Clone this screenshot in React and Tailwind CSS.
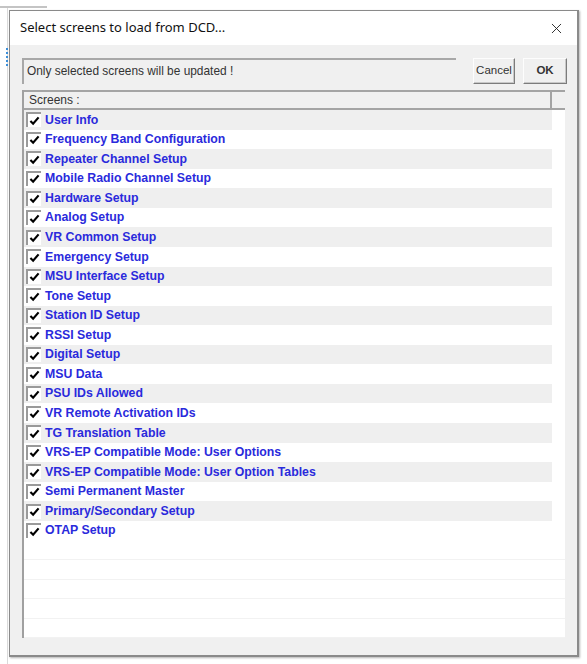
import { X } from 'lucide-react';

const SCREENS = [
  'User Info',
  'Frequency Band Configuration',
  'Repeater Channel Setup',
  'Mobile Radio Channel Setup',
  'Hardware Setup',
  'Analog Setup',
  'VR Common Setup',
  'Emergency Setup',
  'MSU Interface Setup',
  'Tone Setup',
  'Station ID Setup',
  'RSSI Setup',
  'Digital Setup',
  'MSU Data',
  'PSU IDs Allowed',
  'VR Remote Activation IDs',
  'TG Translation Table',
  'VRS-EP Compatible Mode: User Options',
  'VRS-EP Compatible Mode: User Option Tables',
  'Semi Permanent Master',
  'Primary/Secondary Setup',
  'OTAP Setup',
];

const tahoma = { fontFamily: '"Liberation Sans", Arial, sans-serif' };

function CheckBox() {
  return (
    <span className="flex h-[15px] w-[15px] shrink-0 items-center justify-center border-l-2 border-t-2 border-l-[#9a9a9a] border-t-[#9a9a9a] bg-white">
      <svg width="11" height="10" viewBox="0 0 12 11" aria-hidden>
        <path d="M1.5 5.5 L4.5 8.5 L10.5 1.5" fill="none" stroke="#000" strokeWidth="2.4" />
      </svg>
    </span>
  );
}

function ScreenRow({ label, shaded }) {
  return (
    <div className="flex h-[19.57px] shrink-0">
      <div className={`flex w-[528px] items-center pl-[2px] ${shaded ? 'bg-[#efefef]' : 'bg-white'}`}>
        <CheckBox />
        <span className="ml-[4px] text-[12.3px] font-bold text-[#2a2adc]" style={tahoma}>
          {label}
        </span>
      </div>
      <div className="flex-1 bg-white" />
    </div>
  );
}

function WinButton({ children, className = '' }) {
  return (
    <button
      type="button"
      className={`h-[26px] border border-t-[#fdfdfd] border-l-[#fdfdfd] border-r-[#7c7c7c] border-b-[#7c7c7c] bg-[#f0f0f0] text-[11.5px] text-[#333] shadow-[inset_-1px_-1px_0_#c8c8c8] ${className}`}
      style={tahoma}
    >
      {children}
    </button>
  );
}

export default function App() {
  return (
    <div className="relative h-[664px] w-[587px] overflow-hidden bg-white">
      {/* window behind the dialog */}
      <div className="absolute left-0 top-[6px] h-[2px] w-[47px] bg-[#c4c4c4]" />
      <div className="absolute left-[7px] top-[8px] h-[656px] w-[1px] bg-[#dadada]" />
      <div className="absolute left-[6px] top-[48px] h-[18px] w-[2px] border-l-2 border-dotted border-[#3b8ed8]" />

      <div className="relative ml-[9px] mt-[10px] flex h-[647px] w-[570px] flex-col border border-[#8a8a8a] border-r-2 border-b-2 shadow-[1px_1px_2px_rgba(0,0,0,0.3)]">
        <div className="flex h-[34px] shrink-0 items-center justify-between bg-white pl-[10px] pr-[12px]">
          <span className="text-[13px] text-[#111]" style={{ fontFamily: '"Noto Sans", "Open Sans", sans-serif' }}>
            Select screens to load from DCD...
          </span>
          <X className="h-[17px] w-[17px] text-[#222]" strokeWidth={1.3} />
        </div>

        <div className="flex min-h-0 flex-1 flex-col bg-[#f0f0f0] pb-[17px] pl-[12px] pr-[10px] pt-[13px]">
          <div className="flex h-[26px] shrink-0 items-stretch">
            <div
              className="flex flex-1 items-center border-l-2 border-t-2 border-l-[#a8a8a8] border-t-[#a8a8a8] pl-[3px] text-[11.9px] text-[#333]"
              style={tahoma}
            >
              Only selected screens will be updated !
            </div>
            <WinButton className="ml-[17px] w-[42px]">Cancel</WinButton>
            <WinButton className="ml-[8px] w-[44px] border-[#adadad] border-r-[#7c7c7c] border-b-[#7c7c7c] font-bold">OK</WinButton>
          </div>

          <div className="mt-[6px] flex min-h-0 w-[543px] flex-1 flex-col overflow-hidden border-l-2 border-[#a0a0a0]">
            <div className="flex h-[20px] shrink-0 border-y-2 border-[#a4a4a4] bg-[#f0f0f0]">
              <div className="flex w-[528px] items-center border-r-2 border-[#a4a4a4] pl-[5px] text-[12px] text-[#333]" style={tahoma}>
                Screens :
              </div>
            </div>
            {SCREENS.map((label, i) => (
              <ScreenRow key={label} label={label} shaded={i % 2 === 0} />
            ))}
            <div className="flex min-h-0 flex-1 flex-col overflow-hidden bg-white">
              {[0, 1, 2, 3, 4, 5].map((n) => (
                <div key={n} className="h-[19.57px] shrink-0 border-b border-[#f2f2f2]" />
              ))}
            </div>
          </div>
        </div>
      </div>
    </div>
  );
}
